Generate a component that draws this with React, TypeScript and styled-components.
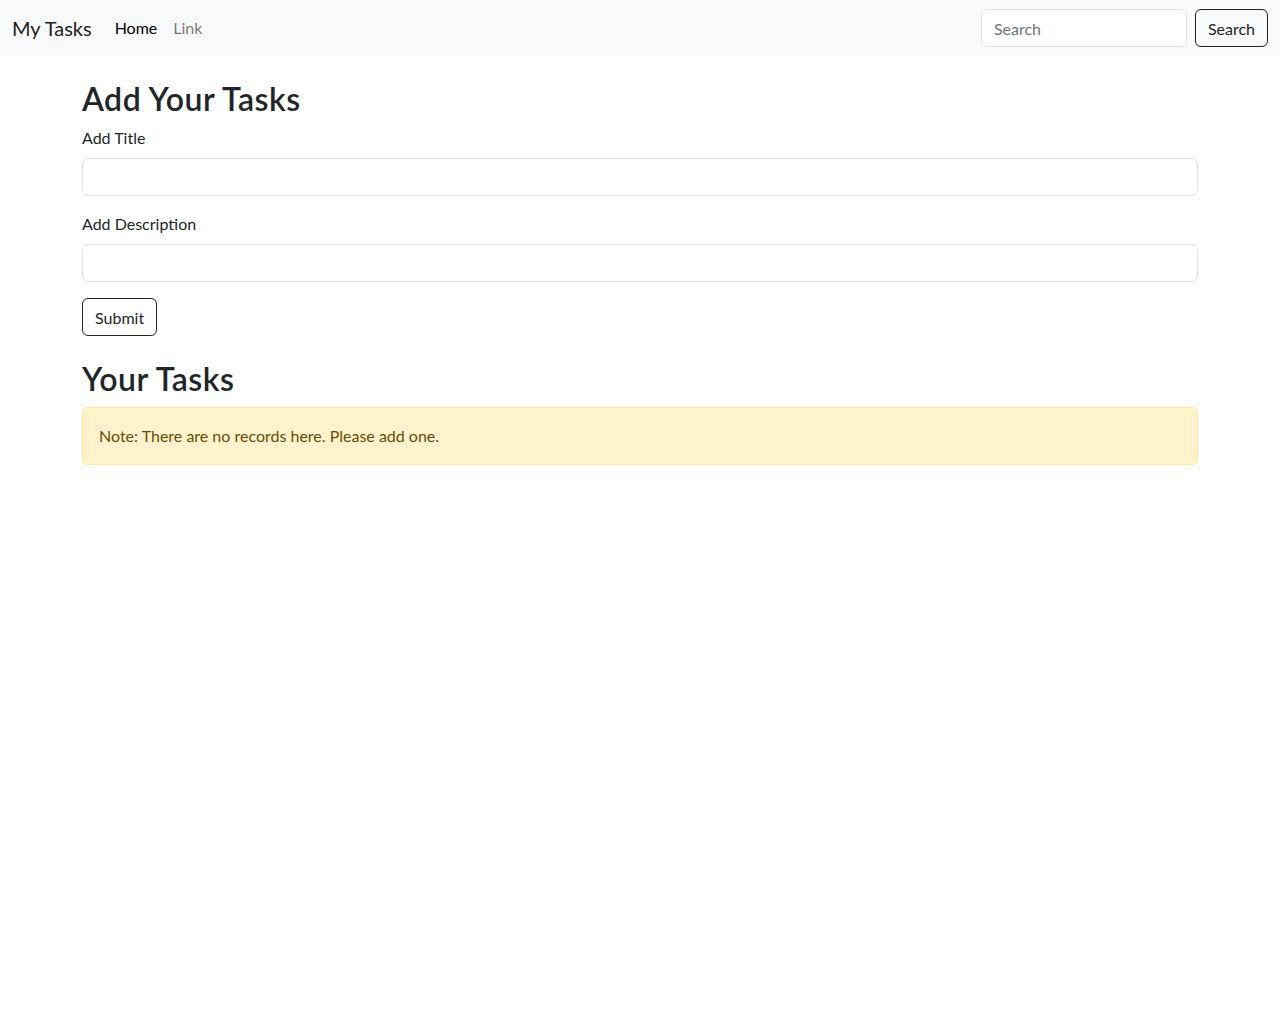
import React from "react";
import styled, { createGlobalStyle } from "styled-components";

const Global = createGlobalStyle`
  * { box-sizing: border-box; }
  body {
    margin: 0;
    font-family: Lato, "Open Sans", sans-serif;
    font-size: 16px;
    line-height: 1.5;
    color: #212529;
    background: #fff;
  }
`;

const Navbar = styled.nav`
  background: #f8f9fa;
  padding: 8px 12px;
  display: flex;
  align-items: center;
  justify-content: space-between;
  height: 56px;
`;

const Left = styled.div`
  display: flex;
  align-items: center;
`;

const Brand = styled.a`
  font-size: 20px;
  color: rgba(0, 0, 0, 0.9);
  margin-right: 15px;
  text-decoration: none;
  line-height: 30px;
`;

const NavLink = styled.a<{ $active?: boolean }>`
  padding: 8px;
  color: ${(p) => (p.$active ? "rgba(0,0,0,1)" : "rgba(0,0,0,0.55)")};
  text-decoration: none;
  font-size: 16px;
`;

const SearchForm = styled.form`
  display: flex;
  gap: 8px;
`;

const Input = styled.input<{ $full?: boolean }>`
  display: block;
  width: ${(p) => (p.$full ? "100%" : "206px")};
  height: 38px;
  padding: 6px 12px;
  font-family: inherit;
  font-size: 16px;
  color: #212529;
  background: #fff;
  border: 1px solid #dee2e6;
  border-radius: 6px;
  outline: none;
  &::placeholder { color: #6c757d; }
`;

const OutlineButton = styled.button`
  height: 38px;
  padding: 6px 12px;
  font-family: inherit;
  font-size: 16px;
  color: #212529;
  background: transparent;
  border: 1px solid #212529;
  border-radius: 6px;
  cursor: pointer;
`;

const Container = styled.main`
  max-width: 1140px;
  margin: 24px auto;
  padding: 0 12px;
`;

const Heading = styled.h2<{ $top?: number }>`
  font-size: 32px;
  font-weight: 600;
  line-height: 1.2;
  letter-spacing: 0.5px;
  margin: ${(p) => p.$top ?? 0}px 0 8px;
`;

const Field = styled.div`
  margin-bottom: 16px;
`;

const Label = styled.label`
  display: block;
  margin-bottom: 8px;
`;

const Alert = styled.div`
  padding: 16px;
  background: #fff3cd;
  border: 1px solid #ffe69c;
  color: #664d03;
  border-radius: 6px;
`;

export default function App() {
  return (
    <>
      <Global />
      <Navbar>
        <Left>
          <Brand href="#">My Tasks</Brand>
          <NavLink $active href="#">Home</NavLink>
          <NavLink href="#">Link</NavLink>
        </Left>
        <SearchForm onSubmit={(e) => e.preventDefault()}>
          <Input type="search" placeholder="Search" />
          <OutlineButton type="submit">Search</OutlineButton>
        </SearchForm>
      </Navbar>
      <Container>
        <Heading>Add Your Tasks</Heading>
        <form onSubmit={(e) => e.preventDefault()}>
          <Field>
            <Label>Add Title</Label>
            <Input $full type="text" />
          </Field>
          <Field>
            <Label>Add Description</Label>
            <Input $full type="text" />
          </Field>
          <OutlineButton type="submit">Submit</OutlineButton>
        </form>
        <Heading $top={24}>Your Tasks</Heading>
        <Alert>Note: There are no records here. Please add one.</Alert>
      </Container>
    </>
  );
}
